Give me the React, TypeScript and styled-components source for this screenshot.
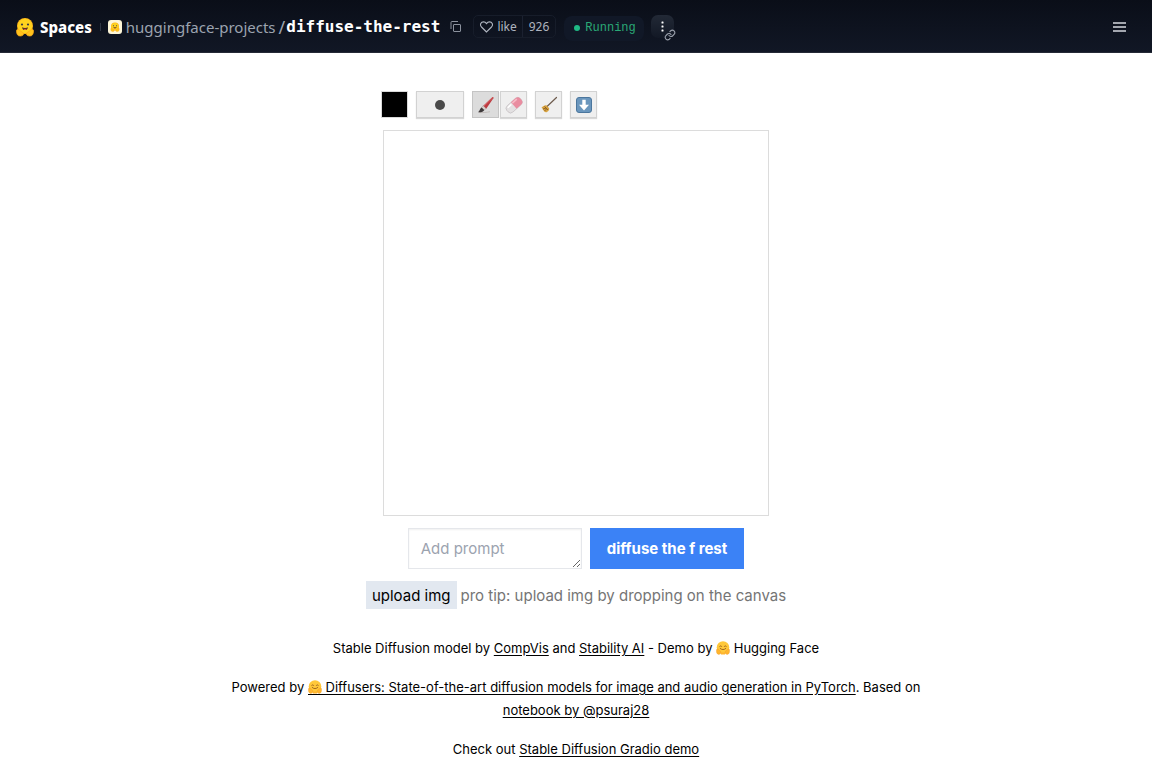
import React from "react";
import styled, { createGlobalStyle } from "styled-components";

const GlobalStyle = createGlobalStyle`
  *, *::before, *::after { box-sizing: border-box; }
  body {
    margin: 0;
    background: #fff;
    color: #000;
    font-family: Inter, "Liberation Sans", sans-serif;
  }
  button, input, textarea { font: inherit; color: inherit; margin: 0; }
  button { padding: 0; border: 0; cursor: pointer; }
  a { color: inherit; }
  svg { display: block; flex: none; }
`;

const Header = styled.header`
  display: flex;
  align-items: center;
  height: 53px;
  padding: 1px 24px 0 15px;
  background: linear-gradient(to bottom, #0a0e18, #111725);
  border-bottom: 1px solid #252a36;
  color: #fff;
  font-family: "Noto Sans", "Open Sans", sans-serif;
  font-size: 16px;
  line-height: 24px;
`;

const Brand = styled.a`
  display: flex;
  align-items: center;
  gap: 5px;
  font-weight: 800;
  font-size: 15px;
  text-decoration: none;
`;

const Divider = styled.span`
  width: 1px;
  height: 8px;
  margin: 0 7px 0 8px;
  background: #2f3643;
`;

const Owner = styled.a`
  display: flex;
  align-items: center;
  gap: 4px;
  color: #9ca3af;
  font-size: 15px;
  text-decoration: none;
`;

const Avatar = styled.span`
  padding: 2px;
  border-radius: 3px;
  background: #fdf6d8;
`;

const Slash = styled.span`
  margin: 0 1px 0 3px;
  color: #9ca3af;
  font-size: 18px;
`;

const SpaceName = styled.a`
  font-family: "DejaVu Sans Mono", monospace;
  font-size: 16px;
  font-weight: 700;
  text-decoration: none;
`;

const IconButton = styled.button`
  display: flex;
  background: none;
  color: #8b919d;
`;

const CopyButton = styled(IconButton)`
  margin: 0 12px 0 10px;
`;

const LikeGroup = styled.div`
  display: flex;
  height: 23px;
  border: 1px solid #171d2a;
  border-radius: 5px;
  color: #aeb4bf;
  font-size: 12px;
  line-height: 21px;
`;

const LikeButton = styled.button`
  display: flex;
  align-items: center;
  gap: 4px;
  padding: 0 5px 0 6px;
  background: none;
`;

const LikeCount = styled.button`
  padding: 0 6px;
  border-left: 1px solid #1b2130;
  background: none;
`;

const Status = styled.div`
  display: flex;
  align-items: center;
  gap: 5px;
  height: 25px;
  margin: 3px 7px 0 8px;
  padding: 0 8px 0 10px;
  border-radius: 8px;
  background: #111827;
  color: #2aa876;
  font-family: "Liberation Mono", monospace;
  font-size: 12px;
`;

const StatusDot = styled.span`
  width: 6px;
  height: 6px;
  border-radius: 50%;
  background: #1fb985;
`;

const MoreButton = styled.button`
  position: relative;
  width: 23px;
  height: 23px;
  border-radius: 7px;
  background: linear-gradient(to bottom, #222936, #121825);
`;

const LinkBadge = styled.span`
  position: absolute;
  right: -2px;
  bottom: -3px;
  color: #9ba1ac;
`;

const MenuButton = styled(IconButton)`
  margin-left: auto;
  color: #d5d8de;
`;

const Main = styled.main`
  display: flex;
  flex-direction: column;
  align-items: center;
  padding: 38px 16px 8px;
`;

const Board = styled.section`
  width: 100%;
  max-width: 390px;
`;

const Toolbar = styled.div`
  display: flex;
  gap: 8px;
  margin-bottom: 12px;
`;

const ToolGroup = styled.div`
  display: flex;
  gap: 1px;
`;

const ColorInput = styled.input`
  width: 27px;
  height: 27px;
  padding: 1px;
  border: 0;
  background: #d9d9d9;
  appearance: none;
  &::-webkit-color-swatch-wrapper { padding: 0; }
  &::-webkit-color-swatch { border: 0; }
`;

const ToolButton = styled.button<{ $wide?: boolean; $active?: boolean }>`
  display: flex;
  align-items: center;
  justify-content: center;
  width: ${(p) => (p.$wide ? 48 : 27)}px;
  height: 27px;
  border: 1px solid ${(p) => (p.$active ? "#c4c4c4" : "#d2d2d2")};
  background: ${(p) => (p.$active ? "#dcdcdc" : "#efefef")};
  box-shadow: ${(p) => (p.$active ? "none" : "0 1px 1px #d8d8d8")};
`;

const BrushDot = styled.span`
  width: 10px;
  height: 10px;
  border-radius: 50%;
  background: #4a4a4a;
`;

const Canvas = styled.canvas`
  display: block;
  width: calc(100% - 4px);
  aspect-ratio: 1;
  margin: 0 2px;
  border: 1px solid #dcdcdc;
`;

const PromptForm = styled.form`
  display: flex;
  gap: 8px;
  margin-top: 12px;
`;

const Prompt = styled.textarea`
  width: 174px;
  height: 41px;
  padding: 8px 12px;
  border: 1px solid #e5e7eb;
  background: #fff;
  box-shadow: inset 0 1px 2px #f0f0f0;
  font-size: 15px;
  line-height: 24px;
  overflow: hidden;
  &::placeholder { color: #9ca3af; }
`;

const Submit = styled.button`
  height: 41px;
  padding: 0 17px;
  background: #3b82f6;
  color: #fff;
  font-size: 15px;
  font-weight: 700;
`;

const UploadRow = styled.div`
  display: flex;
  align-items: center;
  gap: 4px;
  margin-top: 12px;
  color: #757575;
  font-size: 15px;
`;

const UploadButton = styled.button`
  height: 28px;
  padding: 0 6px;
  background: #e2e8f0;
  color: #000;
`;

const Credits = styled.footer`
  width: 100%;
  max-width: 740px;
  margin-top: 28px;
  font-size: 13px;
  line-height: 23px;
  text-align: center;
`;

const Credit = styled.p`
  margin: 0 0 16px;
  a { text-underline-offset: 2px; }
`;

const InlineIcon = styled.span`
  display: inline-block;
  vertical-align: -3px;
  border-bottom: 1px solid transparent;
  a > & { border-color: currentColor; }
`;

const HuggingFace = ({ size }: { size: number }) => (
  <svg width={size} height={size} viewBox="0 0 20 20" aria-hidden="true">
    <circle cx="10" cy="9" r="8" fill="#ffb71b" />
    <circle cx="10" cy="9" r="7.2" fill="#ffd21e" />
    <path d="M1.500 14c0-2 2-2.500 3-.8l3.800 2.800c1 2-1 3-3.300 3s-3.500-2-3.500-5zM18.500 14c0-2-2-2.500-3-.8l-3.800 2.800c-1 2 1 3 3.300 3s3.500-2 3.500-5z" fill="#ffc21c" stroke="#ffab14" strokeWidth=".7" />
    <circle cx="7" cy="7.500" r="1.100" fill="#3a3b45" />
    <circle cx="13" cy="7.500" r="1.100" fill="#3a3b45" />
    <path d="M7 10.200c1.800 1 4.200 1 6 0-.3 2-1.400 2.900-3 2.900s-2.700-.9-3-2.900z" fill="#5a3322" />
    <path d="M8.800 12.400c.7-.6 1.700-.6 2.400 0-.7.8-1.700.8-2.400 0z" fill="#ef4e4e" />
  </svg>
);

const HugEmoji = () => (
  <InlineIcon>
    <svg width="14" height="14" viewBox="0 0 14 14" role="img" aria-label="Hugging face">
      <circle cx="7" cy="6.500" r="6.300" fill="#ffc83a" />
      <path d="M.6 8.500c.8-1 2-.3 2.500.6l1.700 1.500c.7 1.600-.5 2.800-2 2.800C.8 13.400.2 11 .6 8.500zM13.400 8.500c-.8-1-2-.3-2.500.6l-1.700 1.500c-.7 1.600.5 2.800 2 2.800 2 0 2.600-2.400 2.200-4.900z" fill="#ffb52e" stroke="#f09a24" strokeWidth=".4" />
      <path d="M5 12.500h4" stroke="#ffb52e" strokeWidth="2" />
      <path d="M3.800 5.400c.4-.9 1.400-.9 1.800 0M8.400 5.400c.4-.9 1.400-.9 1.800 0M4.200 7.500c1.600 1.500 4 1.500 5.600 0" fill="none" stroke="#8a4f18" strokeWidth=".8" strokeLinecap="round" />
    </svg>
  </InlineIcon>
);

const CopyIcon = () => (
  <svg width="11" height="11" viewBox="0 0 11 11" fill="none" stroke="currentColor">
    <rect x="3.500" y="3.500" width="7" height="7" rx=".5" />
    <path d="M1 8V1.500a1 1 0 0 1 1-1h6" />
  </svg>
);

const HeartIcon = () => (
  <svg width="13" height="12" viewBox="0 0 13 12" fill="none" stroke="currentColor" strokeWidth="1.100">
    <path d="M6.500 11 1.500 6C-.6 3.600 1 .9 3.500.9c1.400 0 2.300.7 3 1.700.7-1 1.600-1.700 3-1.700C12 .9 13.600 3.600 11.500 6z" />
  </svg>
);

const DotsIcon = () => (
  <svg width="23" height="23" viewBox="0 0 23 23" fill="#fff">
    <rect x="10.500" y="6.500" width="2" height="2" rx=".5" />
    <rect x="10.500" y="10.500" width="2" height="2" rx=".5" />
    <rect x="10.500" y="14.500" width="2" height="2" rx=".5" />
  </svg>
);

const LinkIcon = () => (
  <svg width="12" height="12" viewBox="0 0 24 24" fill="none" stroke="currentColor" strokeWidth="2.200" strokeLinecap="round">
    <path d="M10 13a5 5 0 0 0 7.500.5l3-3a5 5 0 0 0-7-7l-1.700 1.700" />
    <path d="M14 11a5 5 0 0 0-7.500-.5l-3 3a5 5 0 0 0 7 7l1.700-1.700" />
  </svg>
);

const MenuIcon = () => (
  <svg width="17" height="12" viewBox="0 0 17 12" fill="none" stroke="currentColor" strokeWidth="1.600">
    <path d="M2 2h13M2 6h13M2 10h13" />
  </svg>
);

const BrushIcon = () => (
  <svg width="18" height="18" viewBox="0 0 18 18">
    <path d="M2 16.500c4 .3 8-.2 11-.8" stroke="#c4bebc" fill="none" />
    <path d="M6 10 15.200 1.200c.8-.5 1.600.2 1.200 1L9 13z" fill="#bd3a40" />
    <path d="M7 10 16 1.500" stroke="#dc6e70" strokeWidth=".8" />
    <path d="M4.600 11.500 6.200 9.700 9 12.500l-1.800 1.600z" fill="#d9d2cd" stroke="#8e8886" strokeWidth=".4" />
    <path d="M4.600 11.500c-2 .9-1.500 3.400-3.600 4.800 2.800.3 5.600-.3 6.200-2.200z" fill="#3f3a3b" />
  </svg>
);

const EraserIcon = () => (
  <svg width="18" height="18" viewBox="0 0 18 18">
    <g transform="rotate(-42 9 9)">
      <rect x="0" y="5" width="18" height="8.500" rx="3.500" fill="#e3e1e2" stroke="#bdb8ba" strokeWidth=".6" />
      <path d="M8.500 5h6a3.500 3.500 0 0 1 3.500 3.500v1.500a3.500 3.500 0 0 1-3.500 3.500h-6z" fill="#e98da0" />
      <path d="M9 6.500h6" stroke="#f6bcc7" strokeWidth="1.500" />
      <path d="M2.500 6.800h5" stroke="#fff" strokeWidth="1.500" />
    </g>
  </svg>
);

const BroomIcon = () => (
  <svg width="18" height="18" viewBox="0 0 18 18">
    <path d="M7 10.500 16.500 1.500" stroke="#6d5b4d" strokeWidth="1.200" strokeLinecap="round" />
    <path d="M1.500 11.500c1.500-.8 3-2.500 4.800-2.200l2.900 2.900c.2 1.800-1 3.400-2.600 4-.7.200-1-.4-1.600-.2-.5-.4-.8-.8-1.300-1 .1-.8-.3-1.200-.9-1.300.1-.9-.6-1.700-1.300-2.200z" fill="#d7a23f" />
    <path d="m4.500 10.500 3.500 3.500M3 13l3-1m-1.500 3 2-2" stroke="#81551f" strokeWidth=".8" />
  </svg>
);

const DownloadIcon = () => (
  <svg width="16" height="16" viewBox="0 0 16 16">
    <rect x=".5" y=".5" width="15" height="15" rx="2.500" fill="#6a96bd" stroke="#4b769d" />
    <path d="M6.300 2.800h3.400v5H13l-5 5.600-5-5.600h3.300z" fill="#fff" />
  </svg>
);

export default function App() {
  return (
    <>
      <GlobalStyle />
      <Header>
        <Brand href="#spaces">
          <HuggingFace size={20} />
          Spaces
        </Brand>
        <Divider />
        <Owner href="#owner">
          <Avatar>
            <HuggingFace size={10} />
          </Avatar>
          huggingface-projects
        </Owner>
        <Slash>/</Slash>
        <SpaceName href="#space">diffuse-the-rest</SpaceName>
        <CopyButton aria-label="Copy space name">
          <CopyIcon />
        </CopyButton>
        <LikeGroup>
          <LikeButton>
            <HeartIcon />
            like
          </LikeButton>
          <LikeCount>926</LikeCount>
        </LikeGroup>
        <Status>
          <StatusDot />
          Running
        </Status>
        <MoreButton aria-label="More options">
          <DotsIcon />
          <LinkBadge>
            <LinkIcon />
          </LinkBadge>
        </MoreButton>
        <MenuButton aria-label="Menu">
          <MenuIcon />
        </MenuButton>
      </Header>
      <Main>
        <Board>
          <Toolbar>
            <ColorInput type="color" defaultValue="#000000" aria-label="Brush color" />
            <ToolButton $wide aria-label="Brush size">
              <BrushDot />
            </ToolButton>
            <ToolGroup>
              <ToolButton $active aria-label="Brush">
                <BrushIcon />
              </ToolButton>
              <ToolButton aria-label="Eraser">
                <EraserIcon />
              </ToolButton>
            </ToolGroup>
            <ToolButton aria-label="Clear">
              <BroomIcon />
            </ToolButton>
            <ToolButton aria-label="Download">
              <DownloadIcon />
            </ToolButton>
          </Toolbar>
          <Canvas width={512} height={512} />
        </Board>
        <PromptForm onSubmit={(e) => e.preventDefault()}>
          <Prompt placeholder="Add prompt" aria-label="Prompt" />
          <Submit type="submit">diffuse the f rest</Submit>
        </PromptForm>
        <UploadRow>
          <UploadButton>upload img</UploadButton>
          <span>pro tip: upload img by dropping on the canvas</span>
        </UploadRow>
        <Credits>
          <Credit>
            Stable Diffusion model by <a href="#compvis">CompVis</a> and <a href="#stability">Stability AI</a> - Demo by <HugEmoji /> Hugging Face
          </Credit>
          <Credit>
            Powered by <a href="#diffusers"><HugEmoji /> Diffusers: State-of-the-art diffusion models for image and audio generation in PyTorch</a>. Based on <a href="#notebook">notebook by @psuraj28</a>
          </Credit>
          <Credit>
            Check out <a href="#gradio">Stable Diffusion Gradio demo</a>
          </Credit>
        </Credits>
      </Main>
    </>
  );
}
